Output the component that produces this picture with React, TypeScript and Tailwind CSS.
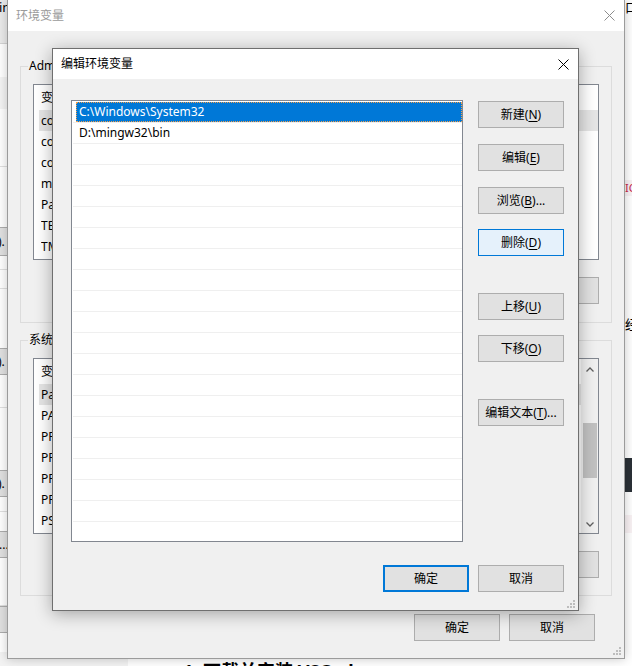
import React from "react";

const U = ({ c }: { c: string }) => <span className="underline underline-offset-[2px]">{c}</span>;

function Btn({ children, kind = "normal" }: { children: React.ReactNode; kind?: "normal" | "hover" | "default" }) {
  if (kind === "hover")
    return (
      <div className="h-[27px] w-[86px] flex items-center justify-center border border-[#0078d7] bg-[#e5f1fb] text-[12px] text-black shrink-0">
        {children}
      </div>
    );
  if (kind === "default")
    return (
      <div className="h-[27px] w-[86px] flex items-center justify-center border-2 border-[#0078d7] bg-[#e1e1e1] text-[12px] text-black shrink-0">
        {children}
      </div>
    );
  return (
    <div className="h-[27px] w-[86px] flex items-center justify-center border border-[#adadad] bg-[#e1e1e1] text-[12px] text-black shrink-0">
      {children}
    </div>
  );
}

function Grip() {
  return (
    <svg width="8" height="8" viewBox="0 0 8 8" className="block">
      <rect x="6" y="0" width="2" height="2" fill="#bdbdbd" />
      <rect x="3" y="3" width="2" height="2" fill="#bdbdbd" />
      <rect x="6" y="3" width="2" height="2" fill="#bdbdbd" />
      <rect x="0" y="6" width="2" height="2" fill="#bdbdbd" />
      <rect x="3" y="6" width="2" height="2" fill="#bdbdbd" />
      <rect x="6" y="6" width="2" height="2" fill="#bdbdbd" />
    </svg>
  );
}

function CloseX({ color }: { color: string }) {
  return (
    <svg width="11" height="11" viewBox="0 0 11 11" className="block">
      <path d="M0.5 0.5 L10.5 10.5 M10.5 0.5 L0.5 10.5" stroke={color} strokeWidth="1" fill="none" />
    </svg>
  );
}

function VarList({ rows, scroll }: { rows: [string, string][]; scroll?: boolean }) {
  return (
    <div className="h-[176px] border border-[#828790] bg-white flex overflow-hidden">
      <div className="flex-1 flex flex-col overflow-hidden">
        <div className="h-[25px] flex items-center pl-[7px] shrink-0">
          <div className="w-[170px]">变量</div>
          <div>值</div>
        </div>
        {rows.map(([n, v], i) => (
          <div
            key={i}
            className={
              i === 0
                ? "h-[21px] ml-[5px] pl-[2px] flex items-center bg-[#e5e5e5] shrink-0"
                : "h-[21px] ml-[5px] pl-[2px] flex items-center shrink-0"
            }
          >
            <div className="w-[170px] whitespace-nowrap overflow-hidden">{n}</div>
            <div className="whitespace-nowrap overflow-hidden">{v}</div>
          </div>
        ))}
      </div>
      {scroll && (
        <div className="w-[17px] bg-[#f0f0f0] flex flex-col shrink-0">
          <div className="h-[17px] flex items-center justify-center pt-[3px]">
            <svg width="8" height="5" viewBox="0 0 8 5">
              <path d="M0.5 4.5 L4 1 L7.5 4.5" stroke="#606060" strokeWidth="1.3" fill="none" />
            </svg>
          </div>
          <div className="flex-1 flex flex-col items-center">
            <div className="mt-[47px] h-[55px] w-[14px] bg-[#c1c1c1]" />
          </div>
          <div className="h-[17px] flex items-center justify-center pb-[1px]">
            <svg width="8" height="5" viewBox="0 0 8 5">
              <path d="M0.5 0.5 L4 4 L7.5 0.5" stroke="#606060" strokeWidth="1.3" fill="none" />
            </svg>
          </div>
        </div>
      )}
    </div>
  );
}

function Group({ label, children, pb }: { label: string; children: React.ReactNode; pb: string }) {
  return (
    <div className={`relative border border-[#dcdcdc] pt-[17px] px-[12px] ${pb}`}>
      <div className="absolute -top-[9px] left-[7px] bg-[#f0f0f0] px-[1px] leading-[16px] whitespace-nowrap">{label}</div>
      {children}
    </div>
  );
}

function LeftStrip() {
  return (
    <div className="w-[7px] shrink-0 flex flex-col overflow-hidden bg-white text-[12px]">
      <div className="h-[44px] bg-[#ebebeb] border-b border-[#d4d4d4] leading-[14px] text-[13px] -ml-[1px]">in</div>
      <div className="h-[33px] bg-white" />
      <div className="h-[32px] bg-[#f4f4f4]" />
      <div className="h-[58px] bg-white border-b border-[#e0e0e0]" />
      <div className="h-[60px] bg-white" />
      <div className="h-[29px] bg-[#e1e1e1] border-y border-[#adadad] flex items-center -ml-[2px]">).</div>
      <div className="h-[14px] bg-white border-b border-[#e0e0e0]" />
      <div className="h-[19px] bg-white border-b border-[#e0e0e0]" />
      <div className="h-[59px] bg-white" />
      <div className="h-[27px] bg-[#e1e1e1] border-y border-[#adadad] flex items-center -ml-[2px]">).</div>
      <div className="h-[33px] bg-white border-b border-[#e0e0e0]" />
      <div className="h-[62px] bg-white" />
      <div className="h-[27px] bg-[#e1e1e1] border-y border-[#adadad] flex items-center -ml-[2px]">).</div>
      <div className="h-[15px] bg-white border-b border-[#e0e0e0]" />
      <div className="h-[19px] bg-white" />
      <div className="h-[27px] bg-[#e1e1e1] border-y border-[#adadad] flex items-center -ml-[1px]">...</div>
      <div className="h-[48px] bg-white border-b border-[#e0e0e0]" />
      <div className="h-[27px] bg-[#e1e1e1] border-y border-[#adadad]" />
      <div className="flex-1 bg-white" />
    </div>
  );
}

function RightStrip() {
  return (
    <div className="w-[8px] shrink-0 flex flex-col overflow-hidden bg-white text-[12px]">
      <div className="h-[16px] leading-[14px] text-[13px] pl-[1px]">口</div>
      <div className="h-[164px]" />
      <div className="h-[16px] bg-[#f9f2f4] text-[#c7254e] leading-[16px] pl-[1px] text-[11px]">IC</div>
      <div className="h-[120px]" />
      <div className="h-[16px] leading-[16px] pl-[1px] text-[13px]">经</div>
      <div className="h-[126px]" />
      <div className="h-[34px] bg-[#2b3137]" />
      <div className="h-[23px]" />
      <div className="h-[18px] bg-[#f9f2f4]" />
      <div className="flex-1" />
    </div>
  );
}

function BgWindow() {
  const userRows: [string, string][] = [
    ["conda_home", "C:\\ProgramData"],
    ["config_dir", "C:\\Users\\Administrator"],
    ["codepath", "D:\\code"],
    ["mingw", "D:\\mingw32"],
    ["Path", "C:\\Users\\Administrator\\AppData"],
    ["TEMP", "C:\\Users\\Administrator\\AppData\\Local\\Temp"],
    ["TMP", "C:\\Users\\Administrator\\AppData\\Local\\Temp"],
  ];
  const sysRows: [string, string][] = [
    ["Path", "C:\\Windows\\System32"],
    ["PATHEXT", ".COM;.EXE;.BAT;.CMD"],
    ["PROCESSOR_ARCHITECTURE", "AMD64"],
    ["PROCESSOR_IDENTIFIER", "Intel64 Family 6"],
    ["PROCESSOR_LEVEL", "6"],
    ["PROCESSOR_REVISION", "9e0a"],
    ["PSModulePath", "%ProgramFiles%\\WindowsPowerShell"],
  ];
  return (
    <div className="absolute left-[7px] top-[-1px] w-[618px] h-[660px] border border-[#9b9b9b] bg-[#f0f0f0] shadow-[0_0_10px_rgba(0,0,0,0.22)] flex flex-col">
      <div className="h-[31px] bg-white flex items-center justify-between pl-[8px] pr-[9px] shrink-0">
        <div className="text-[#9a9a9a]">环境变量</div>
        <CloseX color="#8c8c8c" />
      </div>
      <div className="flex-1 px-[12px] flex flex-col">
        <div className="mt-[35px]">
          <Group label="Administrator 的用户变量(U)" pb="pb-[18px]">
            <VarList rows={userRows} />
            <div className="mt-[17px] flex justify-end gap-[9px]">
              <Btn>新建(<U c="N" />)...</Btn>
              <Btn>编辑(<U c="E" />)...</Btn>
              <Btn>删除(<U c="D" />)</Btn>
            </div>
          </Group>
        </div>
        <div className="mt-[17px]">
          <Group label="系统变量(S)" pb="pb-[17px]">
            <VarList rows={sysRows} scroll />
            <div className="mt-[17px] flex justify-end gap-[9px]">
              <Btn>新建(<U c="W" />)...</Btn>
              <Btn>编辑(<U c="I" />)...</Btn>
              <Btn>删除(<U c="L" />)</Btn>
            </div>
          </Group>
        </div>
        <div className="mt-[18px] flex justify-end gap-[9px] pr-[17px]">
          <Btn>确定</Btn>
          <Btn>取消</Btn>
        </div>
      </div>
      <div className="absolute right-[3px] bottom-[3px]">
        <Grip />
      </div>
    </div>
  );
}

function Dialog() {
  const items = ["C:\\Windows\\System32", "D:\\mingw32\\bin"];
  const rows = Array.from({ length: 20 }, (_, i) => items[i] ?? "");
  return (
    <div className="absolute left-[52px] top-[48px] w-[527px] h-[563px] border border-[#6f6f6f] bg-[#f0f0f0] shadow-[0_3px_16px_rgba(0,0,0,0.32)] flex flex-col">
      <div className="h-[30px] bg-white flex items-center justify-between pl-[8px] pr-[9px] shrink-0">
        <div>编辑环境变量</div>
        <CloseX color="#000000" />
      </div>
      <div className="flex-1 flex flex-col pl-[18px] pr-[14px] pt-[21px]">
        <div className="flex gap-[15px]">
          <div className="w-[392px] h-[442px] border border-[#828790] bg-white pt-[1px] flex flex-col overflow-hidden">
            {rows.map((t, i) =>
              i === 0 ? (
                <div key={i} className="ml-[1px] h-[21px] border-b border-[#efefef] flex shrink-0">
                  <div className="ml-[3px] flex-1 h-[20px] bg-[#0078d7] text-white border border-dotted border-[#f5a04a] pl-[2px] flex items-center whitespace-nowrap">
                    {t}
                  </div>
                </div>
              ) : (
                <div key={i} className="ml-[1px] h-[21px] border-b border-[#efefef] flex items-center pl-[6px] shrink-0 whitespace-nowrap">
                  {t}
                </div>
              )
            )}
          </div>
          <div className="w-[86px] pt-[1px] flex flex-col">
            <Btn>新建(<U c="N" />)</Btn>
            <div className="mt-[16px]"><Btn>编辑(<U c="E" />)</Btn></div>
            <div className="mt-[16px]"><Btn>浏览(<U c="B" />)...</Btn></div>
            <div className="mt-[15px]"><Btn kind="hover">删除(<U c="D" />)</Btn></div>
            <div className="mt-[37px]"><Btn>上移(<U c="U" />)</Btn></div>
            <div className="mt-[15px]"><Btn>下移(<U c="O" />)</Btn></div>
            <div className="mt-[37px]"><Btn>编辑文本(<U c="T" />)...</Btn></div>
          </div>
        </div>
        <div className="mt-[23px] flex justify-end gap-[9px]">
          <Btn kind="default">确定</Btn>
          <Btn>取消</Btn>
        </div>
      </div>
      <div className="absolute right-[3px] bottom-[2px]">
        <Grip />
      </div>
    </div>
  );
}

export default function App() {
  return (
    <div className="relative w-[632px] h-[666px] overflow-hidden bg-white font-['Noto_Sans','Noto_Sans_CJK_SC',sans-serif] text-[12px] text-black">
      <div className="flex flex-col w-full h-full">
        <div className="flex h-[652px] shrink-0">
          <LeftStrip />
          <div className="flex-1 bg-white" />
          <RightStrip />
        </div>
        <div className="flex flex-1">
          <div className="w-[128px] bg-[#f3f3f3]" />
          <div className="pl-[55px] text-[18px] font-bold leading-[20px] pt-[9px] whitespace-nowrap">1. 下载并安装 VSCode</div>
        </div>
      </div>
      <BgWindow />
      <Dialog />
    </div>
  );
}
